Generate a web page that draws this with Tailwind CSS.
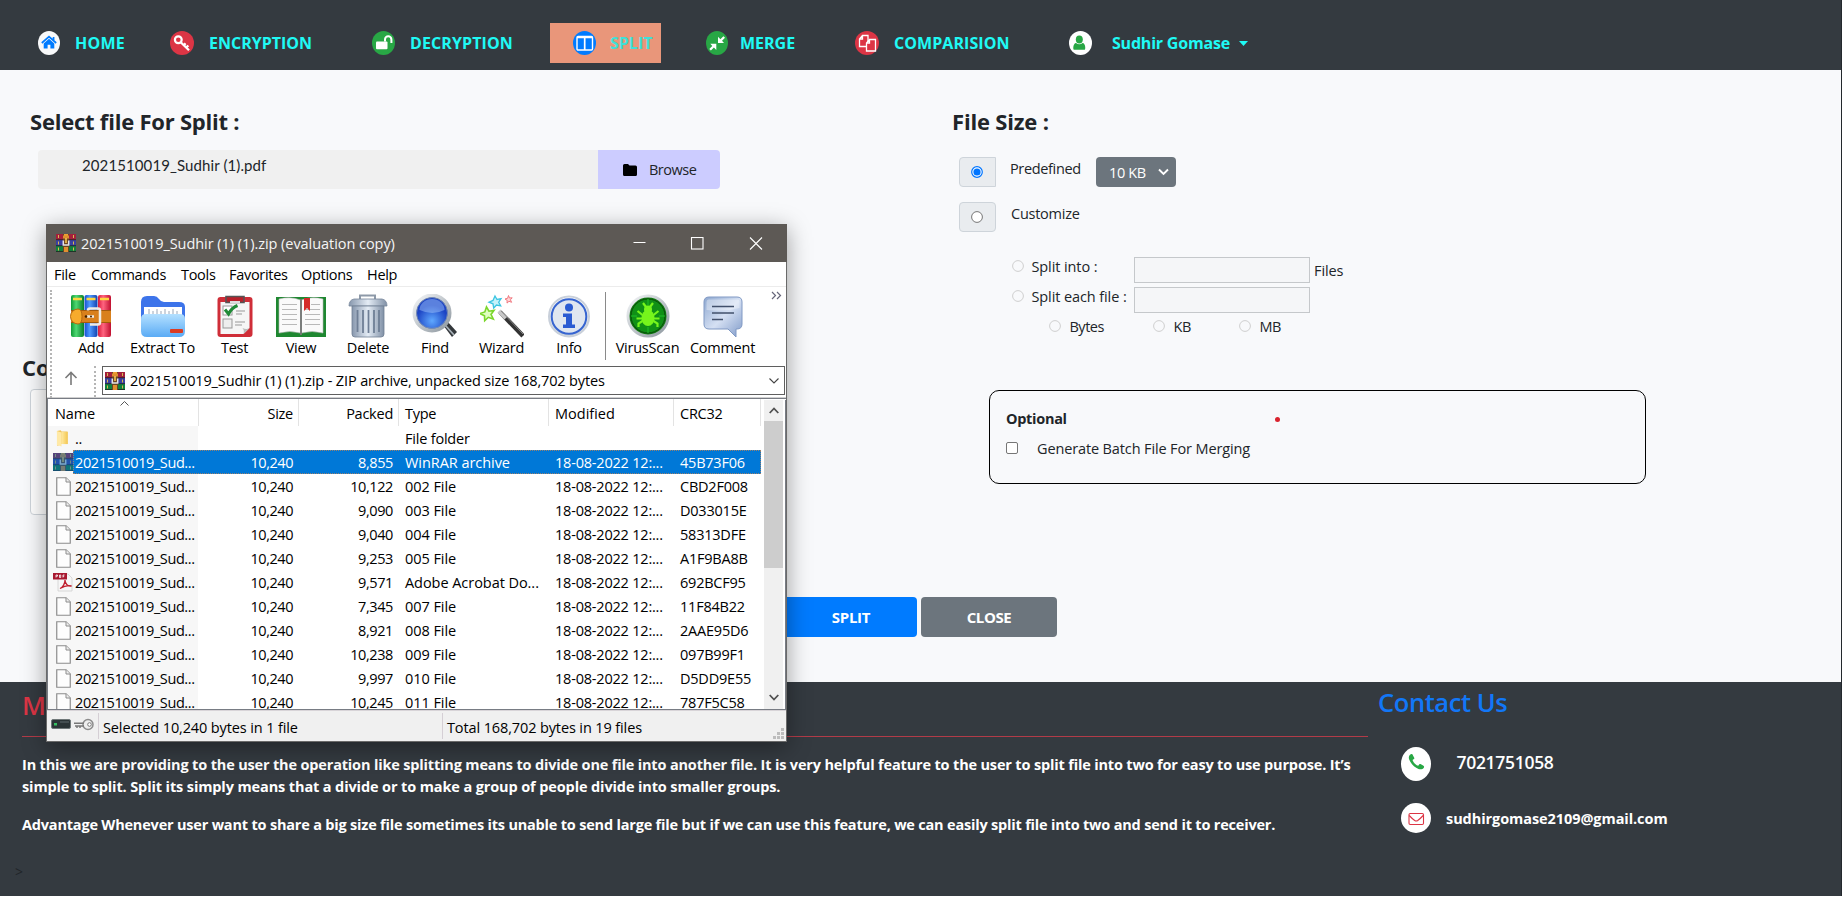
<!DOCTYPE html>
<html lang="en">
<head>
<meta charset="utf-8">
<title>Split PDF</title>
<script src="https://cdn.jsdelivr.net/npm/@tailwindcss/browser@4"></script>
</head>
<body class="relative h-[897px] w-[1842px] overflow-hidden bg-white font-['Open_Sans','Noto_Sans',sans-serif] text-[15px] text-[#212529]">
<svg width="0" height="0" class="absolute">
  <defs>
    <linearGradient id="gg" x2="1" y2="0"><stop offset="0" stop-color="#0f9a35"/><stop offset=".4" stop-color="#4fd873"/><stop offset="1" stop-color="#0a7f2a"/></linearGradient>
    <linearGradient id="gb" x2="1" y2="0"><stop offset="0" stop-color="#1550d0"/><stop offset=".4" stop-color="#4f9bff"/><stop offset="1" stop-color="#1242b0"/></linearGradient>
    <linearGradient id="gr" x2="1" y2="0"><stop offset="0" stop-color="#d81c3c"/><stop offset=".4" stop-color="#ff6480"/><stop offset="1" stop-color="#c01030"/></linearGradient>
    <linearGradient id="gf" x2="0" y2="1"><stop offset="0" stop-color="#b4e0ff"/><stop offset="1" stop-color="#5aabf5"/></linearGradient>
    <linearGradient id="gs" x2="1" y2="0"><stop offset="0" stop-color="#8797ad"/><stop offset=".5" stop-color="#e4ecf5"/><stop offset="1" stop-color="#8090a6"/></linearGradient>
    <linearGradient id="gc" x2="1" y2="1"><stop offset="0" stop-color="#8ea8d0"/><stop offset=".5" stop-color="#d5e0f3"/><stop offset="1" stop-color="#7f9ac8"/></linearGradient>
    <radialGradient id="gl" cy=".75"><stop offset="0" stop-color="#5fa8ff"/><stop offset="1" stop-color="#1c44c4"/></radialGradient>
    <linearGradient id="gm" x2="1" y2="1"><stop offset="0" stop-color="#f4f6f8"/><stop offset="1" stop-color="#8d979f"/></linearGradient>
    <linearGradient id="gi" x2="0" y2="1"><stop offset="0" stop-color="#fff"/><stop offset="1" stop-color="#c9d2dd"/></linearGradient>
    <linearGradient id="gy" x2="1" y2="0"><stop offset="0" stop-color="#ffe9a0"/><stop offset="1" stop-color="#f3c752"/></linearGradient>
    <symbol id="rar" viewBox="0 0 20 18">
      <rect width="20" height="6" fill="#a3203c"/><rect y="6" width="20" height="6" fill="#3a3fa0"/><rect y="12" width="20" height="6" fill="#12803c"/>
      <path d="M0 5.700h20M0 11.700h20M0 17.500h20" stroke="#222" stroke-width=".8"/>
      <path d="M2.500 1v3M2.500 7.500v3M2.500 13.500v3M17.500 1v3M17.500 7.500v3M17.500 13.500v3" stroke="#d8b850"/>
      <rect x="7" width="6" height="18" fill="#6a4424"/><path d="M8 0h4v4H8z" fill="#f0a030"/><path d="M7 1.500h6v3H7zM8 13h4v5H8z" fill="#e09030"/>
      <path d="M7.300 6.500v4.500h5.400V6.500" fill="none" stroke="#e4e4e4" stroke-width="1.500"/><path d="M10 4v5" stroke="#ffcc50" stroke-width="1.500"/>
    </symbol>
    <symbol id="page" viewBox="0 0 15 19"><path d="M.75.75H10l4.250 4.250v13.250H.75z" fill="#fdfdfd" stroke="#8c8c8c" stroke-width="1.200"/><path d="M10 .75V5h4.250" fill="#eee" stroke="#8c8c8c"/></symbol>
    <symbol id="pdf" viewBox="0 0 20 19"><path d="M5 1h10l4 4v13H5z" fill="#f6f6f6" stroke="#d0d0d0" stroke-width=".8"/><rect width="14" height="6.500" fill="#a81830"/><path d="M3 4.500V2h1.500v1.200H3M6.500 2v2.500h1.200V2zM10 4.500V2h1.500M10 3.300h1.200" stroke="#fff" stroke-width=".8" fill="none"/><path d="M7 15.500c3-1 5-5 5-8.500 0 4 3 6.500 6.500 6-4-1-8 .5-11.500 2.500z" fill="none" stroke="#c01f2e" stroke-width="1.300"/></symbol>
    <symbol id="folder" viewBox="0 0 14 18"><path d="M1 1l4-.8 1 1.300h6.500V15H5.500l-4 2z" fill="#f0c55a"/><path d="M1 1l5 1.500V17.500L1 16z" fill="#ffe9a6"/><path d="M6 2h6.500v13H6z" fill="url(#gy)"/></symbol>
  </defs>
</svg>

<!-- Navigation -->
<header class="flex h-[70px] w-[1841px] items-start bg-[#343a40] pt-[23px] pl-[38px] text-[16px] font-bold text-[#1ffaf5]">
  <a class="flex h-10 w-[132px] shrink-0 items-center">
    <svg class="mr-[15px] h-6 w-[22px]" viewBox="0 0 22 24"><ellipse cx="11" cy="12" rx="11" ry="12" fill="#f8f9fa"/><path d="M11 7.800 5.700 12.500v5h3.900v-3.700h2.800v3.700h3.900v-5z" fill="#007bff"/><path d="M3.800 12 11 5.700l7.200 6.300M15.600 6v3" fill="none" stroke="#007bff" stroke-width="1.700"/></svg>
    <span class="tracking-[0.2px]">HOME</span></a>
  <a class="flex h-10 w-[202px] shrink-0 items-center">
    <svg class="mr-[15px] h-6 w-6" viewBox="0 0 24 24"><ellipse cx="12" cy="12" rx="12" ry="12" fill="#dc3545"/><circle cx="8.300" cy="8.800" r="3.400" fill="none" stroke="#fff" stroke-width="2.200"/><path d="M10.700 11.200 19 19.300M16.300 16.500l2-2M13.800 14.200l1.800-1.800" stroke="#fff" stroke-width="2.300"/></svg>
    <span>ENCRYPTION</span></a>
  <a class="flex h-10 w-[178px] shrink-0 items-center">
    <svg class="mr-[15px] h-6 w-[23px]" viewBox="0 0 23 24"><ellipse cx="11.500" cy="12" rx="11.500" ry="12" fill="#28a745"/><rect x="4" y="10.500" width="11.500" height="7.800" rx="1" fill="#fff"/><path d="M13 10.500V8.500a3.200 3.200 0 0 1 6.400 0V12" fill="none" stroke="#fff" stroke-width="2"/></svg>
    <span class="tracking-[0.1px]">DECRYPTION</span></a>
  <a class="flex h-10 w-[111px] shrink-0 items-center bg-[#e9967a] pl-[23px]">
    <svg class="mr-[14px] h-6 w-[23px]" viewBox="0 0 23 24"><ellipse cx="11.500" cy="12" rx="11.500" ry="12" fill="#007bff"/><rect x="4" y="5.500" width="15.500" height="13.500" rx="1" fill="none" stroke="#fff" stroke-width="1.400"/><path d="M4 6.500h15.500M11.700 6v13" stroke="#fff" stroke-width="1.700"/></svg>
    <span class="text-[#40e0d8]">SPLIT</span></a>
  <a class="ml-[45px] flex h-10 w-[149px] shrink-0 items-center">
    <svg class="mr-[12px] h-6 w-[22px]" viewBox="0 0 22 24"><ellipse cx="11" cy="12" rx="11" ry="12" fill="#28a745"/><path d="M12 5.800V12h6l-2-2.200 3-3-1.600-1.600-3 3zM10.300 19v-6.200h-6l2 2.200-3 3 1.600 1.600 3-3z" fill="#fff"/></svg>
    <span>MERGE</span></a>
  <a class="flex h-10 w-[214px] shrink-0 items-center">
    <svg class="mr-[15px] h-6 w-6" viewBox="0 0 24 24"><ellipse cx="12" cy="12" rx="12" ry="12" fill="#dc3545"/><path d="M7.500 4.500h5.500v11H4.500V8zM7.500 4.500V8h-3" fill="none" stroke="#fff" stroke-width="1.300"/><path d="M14.500 8.500h6V20h-9v-8zM14.500 8.500V12h-3" fill="#dc3545" stroke="#fff" stroke-width="1.300"/></svg>
    <span class="tracking-[0.07px]">COMPARISION</span></a>
  <a class="flex h-10 shrink-0 items-center">
    <svg class="mr-[20px] h-6 w-[23px]" viewBox="0 0 23 24"><ellipse cx="11.500" cy="12" rx="11.500" ry="12" fill="#fff"/><ellipse cx="10.300" cy="8.500" rx="3.500" ry="4" fill="#28a745"/><path d="M5 18.800c-1.200 0-1-6.500 2-6.700 2 1.600 4.600 1.600 6.600 0 3 .2 3.200 6.700 2 6.700z" fill="#28a745"/></svg>
    <span class="w-[127px] tracking-[-0.2px]">Sudhir Gomase</span>
    <svg class="h-[5px] w-[9px]" viewBox="0 0 9 5"><path d="M0 0h9L4.500 5z" fill="#1ffaf5"/></svg></a>
</header>

<main class="flex h-[612px] w-[1841px] bg-[#f8f9fb]">
  <!-- File selection -->
  <section class="w-[952px] shrink-0 pt-[36px]">
    <h4 class="pl-[30px] text-[22px] leading-[30px] font-bold tracking-[-0.22px]">Select file For Split :</h4>
    <div class="mt-[14px] ml-[38px] flex h-[39px] w-[682px] overflow-hidden rounded-[4px]">
      <div class="w-[560px] bg-[#f0f0f0] pt-[4px] pl-[44px] font-['Lato',sans-serif] text-[15px] leading-[22px] tracking-[0.1px]">2021510019_Sudhir (1).pdf</div>
      <button class="flex flex-1 items-center bg-[#ccccff] pl-[25px]">
        <svg class="mr-[12px] h-[12px] w-[14px]" viewBox="0 0 14 12"><path d="M0 1.500Q0 0 1.500 0h3.500l1.500 1.500h6Q14 1.500 14 3v7.500Q14 12 12.500 12h-11Q0 12 0 10.500z"/></svg>
        <span class="text-[14.5px] tracking-[-0.5px]">Browse</span></button>
    </div>
    <h4 class="mt-[163px] pl-[22px] text-[22px] leading-[30px] font-bold">Co</h4>
    <div class="mt-[7px] ml-[30px] h-[126px] w-[700px] rounded-[4px] border border-[#ced4da] bg-white"></div>
    <div class="mt-[82px] ml-[781px] flex gap-1 text-center text-[15px] font-bold text-white">
      <button class="h-10 w-[136px] shrink-0 rounded-[4px] bg-[#007bff] pt-px pl-[4px] tracking-[-0.25px]">SPLIT</button>
      <button class="h-10 w-[136px] shrink-0 rounded-[4px] bg-[#6c757d] pt-px tracking-[-0.4px]">CLOSE</button>
    </div>
  </section>

  <!-- Size options -->
  <section class="flex-1 pt-[36px]">
    <h4 class="text-[22px] leading-[30px] font-bold tracking-[-0.18px]">File Size :</h4>
    <div class="mt-[21px] ml-[7px] flex h-[30px]">
      <div class="flex w-[37px] items-center rounded-l-[4px] border border-[#ced4da] bg-[#e9ecef] pl-[10.500px]">
        <svg class="size-3" viewBox="0 0 12 12"><circle cx="6" cy="6" r="5.300" fill="#fff" stroke="#0075ff" stroke-width="1.200"/><circle cx="6" cy="6" r="3.600" fill="#0075ff"/></svg></div>
      <span class="w-[100px] pl-[14px] text-[14.5px] leading-[23px] tracking-[-0.35px]">Predefined</span>
      <div class="flex w-20 items-center rounded-[4px] bg-[#6c757d] pl-[13px] text-[14.5px] text-white"><span class="w-[49px] pt-px tracking-[-0.4px]">10 KB</span>
        <svg class="h-[8px] w-[11px]" viewBox="0 0 11 8"><path d="M1 1.500 5.500 6 10 1.500" fill="none" stroke="#fff" stroke-width="1.900"/></svg></div>
    </div>
    <div class="mt-[15px] ml-[7px] flex h-[30px]">
      <div class="flex w-[37px] items-center rounded-[4px] border border-[#ced4da] bg-[#e9ecef] pl-[10.500px]">
        <svg class="size-3" viewBox="0 0 12 12"><circle cx="6" cy="6" r="5.400" fill="#fff" stroke="#767676"/></svg></div>
      <span class="pl-[15px] text-[14.5px] leading-[23px] tracking-[-0.25px]">Customize</span>
    </div>
    <div class="mt-[25px] ml-[60px] flex h-[26px] text-[14.5px] tracking-[-0.1px]">
      <svg class="mt-[2.500px] size-3" viewBox="0 0 12 12"><circle cx="6" cy="6" r="5.400" fill="#f8f9fb" stroke="#cfcfcf"/></svg>
      <span class="w-[110px] pl-[7.500px] leading-[20px]">Split into :</span>
      <input disabled class="h-[26px] w-[176px] border border-[#c5c8cb] bg-[#f5f6f8]"><span class="pl-1 leading-[27px]">Files</span>
    </div>
    <div class="mt-1 ml-[60px] flex h-[26px] text-[14.5px] tracking-[-0.1px]">
      <svg class="mt-[2.500px] size-3" viewBox="0 0 12 12"><circle cx="6" cy="6" r="5.400" fill="#f8f9fb" stroke="#cfcfcf"/></svg>
      <span class="w-[110px] pl-[7.500px] leading-[20px]">Split each file :</span>
      <input disabled class="h-[26px] w-[176px] border border-[#c5c8cb] bg-[#f5f6f8]">
    </div>
    <div class="mt-[3px] ml-[96.500px] flex h-[22px] items-center text-[14.500px] tracking-[-0.5px]">
      <svg class="mr-[9px] mb-[3px] size-3" viewBox="0 0 12 12"><circle cx="6" cy="6" r="5.400" fill="#f8f9fb" stroke="#cfcfcf"/></svg><span class="w-[83px]">Bytes</span>
      <svg class="mr-[9px] mb-[3px] size-3" viewBox="0 0 12 12"><circle cx="6" cy="6" r="5.400" fill="#f8f9fb" stroke="#cfcfcf"/></svg><span class="w-[65px]">KB</span>
      <svg class="mr-[9px] mb-[3px] size-3" viewBox="0 0 12 12"><circle cx="6" cy="6" r="5.400" fill="#f8f9fb" stroke="#cfcfcf"/></svg><span>MB</span>
    </div>
    <div class="mt-[52px] ml-[37px] h-[94px] w-[657px] rounded-[10px] border border-black pt-[18px] pl-4">
      <div class="flex h-[20px] items-center"><b class="w-[269px] text-[14.5px] tracking-[-0.3px]">Optional</b><svg class="size-[5px]" viewBox="0 0 5 5"><circle cx="2.500" cy="2.500" r="2.500" fill="#d9232e"/></svg></div>
      <div class="mt-[9px] flex h-[22px] items-center"><span class="mb-[3px] size-3 rounded-[2px] border border-[#767676] bg-white"></span><span class="pl-[19px] text-[14.5px] tracking-[-0.13px]">Generate Batch File For Merging</span></div>
    </div>
  </section>
</main>

<footer class="flex h-[214px] w-[1841px] bg-[#343a40] text-white">
  <div class="w-[1368px] shrink-0 pl-[22px]">
    <h3 class="h-[55px] border-b border-[#b23b48] pt-[5px] text-[26px] leading-[36px] font-semibold text-[#dc3545]">M</h3>
    <p class="mt-[17px] text-[14.500px] leading-[22.400px] font-bold tracking-[-0.165px] whitespace-nowrap">In this we are providing to the user the operation like splitting means to divide one file into another file. It is very helpful feature to the user to split file into two for easy to use purpose. It’s<br><span class="tracking-[-0.12px]">simple to split. Split its simply means that a divide or to make a group of people divide into smaller groups.</span></p>
    <p class="mt-[15px] text-[14.500px] leading-[22.400px] font-bold tracking-[-0.195px] whitespace-nowrap">Advantage Whenever user want to share a big size file sometimes its unable to send large file but if we can use this feature, we can easily split file into two and send it to receiver.</p>
    <div class="mt-[26px] -ml-[7px] text-[14px] leading-[20px] text-[#212529]">&gt;</div>
  </div>
  <div class="pt-[2px] pl-[10px]">
    <h3 class="text-[25.500px] leading-[36px] font-semibold tracking-[-0.42px] text-[#1277f7]">Contact Us</h3>
    <div class="mt-[27px] ml-[23px] flex h-[34px]">
      <svg class="h-[34px] w-[30px]" viewBox="0 0 30 34"><ellipse cx="15" cy="17" rx="15" ry="17" fill="#fff"/><path d="M9 7.800c-1.300 1-1.500 2.700-.8 4.700 1.500 4 5.300 8 9.300 9.500 2 .7 4.300.4 5.300-1.300.5-1 .3-1.700-.3-2l-3-1.600c-.6-.3-1-.1-1.300.3l-1 1.400c-2.600-1-4.700-3-5.700-5.700l1.400-1c.5-.4.6-.8.3-1.400L11.500 7.600c-.6-.9-1.600-.5-2.500.2z" fill="#28a745"/></svg>
      <span class="pl-[25.500px] text-[17.500px] leading-[31px] font-semibold tracking-[-0.3px]">7021751058</span></div>
    <div class="mt-[22px] ml-[23px] flex h-[30px] items-center">
      <svg class="h-[30px] w-[30px]" viewBox="0 0 30 30"><circle cx="15" cy="15" r="15" fill="#fff"/><rect x="8" y="10.500" width="14.500" height="11" rx="1.200" fill="none" stroke="#dc3545" stroke-width="1.100"/><path d="M8.200 12.500q3 3.200 5.500 5 1.500 1 3 0 2.500-1.800 5.500-5" fill="none" stroke="#dc3545" stroke-width="1.100"/></svg>
      <span class="pt-[2px] pl-[15px] text-[14.500px] font-bold tracking-[-0.07px]">sudhirgomase2109@gmail.com</span></div>
  </div>
</footer>
<div class="absolute top-0 right-0 h-[896px] w-px bg-[#23282d]"></div>

<!-- Archive window -->
<div class="absolute top-[224px] left-[46px] flex h-[518px] w-[741px] flex-col border border-[#6a6a6a] bg-white text-[14.500px] text-black shadow-[0_5px_22px_rgba(0,0,0,0.38)]">
  <div class="-mx-px -mt-px flex h-[38px] shrink-0 items-center bg-[#5d5955] pl-[10px] text-white">
    <svg class="mr-[5px] h-[18px] w-5"><use href="#rar"/></svg>
    <span class="flex-1 pt-px tracking-[-0.05px] text-[#f5f5f5]">2021510019_Sudhir (1) (1).zip (evaluation copy)</span>
    <svg class="mr-[24px] h-[13px] w-[130px]" viewBox="0 0 130 13" fill="none" stroke="#fff" stroke-width="1.100"><path d="M0.500 5.500h12M117 .500l12 12M129 .500l-12 12"/><rect x="58.500" y=".500" width="11.500" height="11.500"/></svg>
  </div>
  <div class="flex h-[25px] shrink-0 items-center border-b border-[#ececec] pt-[2px] pl-[7px] tracking-[-0.3px]">
    <span class="w-[37px]">File</span><span class="w-[90px]">Commands</span><span class="w-[48px]">Tools</span><span class="w-[72px]">Favorites</span><span class="w-[66px]">Options</span><span>Help</span>
  </div>
  <div class="relative flex h-[79px] shrink-0 pt-[7px] pl-[10px] text-center leading-[20px] tracking-[-0.25px]">
    <div class="absolute top-[3px] left-[3px] h-[108px] border-l-2 border-dotted border-[#b5b5b5]"></div>
    <div class="flex w-[68px] flex-col items-center">
      <svg class="h-[44px] w-[42px]" viewBox="0 0 42 44"><rect x="1" y="1" width="13" height="42" rx="2" fill="url(#gg)"/><rect x="14.500" y="1" width="13" height="42" rx="2" fill="url(#gb)"/><rect x="28" y="1" width="13" height="42" rx="2" fill="url(#gr)"/><path d="M3 5h9M16.500 5h9M30 5h9" stroke="#ffd640" stroke-width="2.500"/><rect x="1" y="16" width="40" height="13" fill="#d9801c"/><path d="M1 16.500h40M1 28.500h40" stroke="#a35a0c"/><path d="M8 15a7.500 7.500 0 0 0 0 15q4 0 4-7.500T8 15z" fill="#f7ab2c" stroke="#b5690f"/><path d="M18 16.500q0-2 2-2h8q2 0 2 2v12q0 2-2 2h-8M24 22.500h-7" fill="none" stroke="#f0ece4" stroke-width="2.500"/><circle cx="16" cy="22.500" r="1.300" fill="#402000"/><circle cx="21" cy="22.500" r="1" fill="#402000"/></svg>
      <span>Add</span></div>
    <div class="flex w-[75px] flex-col items-center">
      <svg class="h-[44px] w-[46px]" viewBox="0 0 46 44"><path d="M1 8q0-6 6-6h7q3 0 5 3t5 3h15q6 0 6 5v16H1z" fill="#3d74ea"/><path d="M4 13h38v12H4z" fill="#fff"/><path d="M9 15v5M13 17v3M17 15v5M21 17v3M25 15v5M29 17v3M33 15v5M37 17v3" stroke="#9aa7b8"/><path d="M1 25q0-5 5-5h34q5 0 5 5v12q0 6-6 6H7q-6 0-6-6z" fill="url(#gf)"/><rect x="30" y="35" width="13" height="4" rx="1" fill="#dc3b22"/></svg>
      <span>Extract To</span></div>
    <div class="flex w-[69px] flex-col items-center">
      <svg class="h-[44px] w-[36px]" viewBox="0 0 36 44"><rect x=".5" y="3" width="35" height="40" rx="3" fill="#cf2e38"/><path d="M3.500 8h29v26l-6 6h-23z" fill="#f6f6f6"/><path d="M32.500 34l-6 6q1-4-1-6 4 2 7 0z" fill="#bbb"/><path d="M9 2.500h18v6H9z" fill="#b8202a" stroke="#555" stroke-width="1.600"/><path d="M13 8h10" stroke="#ddd" stroke-width="2"/><rect x="6" y="12" width="9" height="9" fill="#fff" stroke="#999"/><rect x="6" y="25" width="9" height="9" fill="#eee" stroke="#999"/><path d="M8 15.500 11.500 20q3-6 9-8.500" fill="none" stroke="#1f8a36" stroke-width="3"/><path d="M19 17h9M19 20h6M18 28h10M18 31h7" stroke="#999"/></svg>
      <span>Test</span></div>
    <div class="flex w-[64px] flex-col items-center">
      <svg class="h-[44px] w-[52px]" viewBox="0 0 52 44"><path d="M1 3h50v40H1z" fill="#1e8730"/><path d="M4 5q11-3 21.500 1v33Q15 36 4 39z" fill="#fafafa" stroke="#bbb" stroke-width=".6"/><path d="M48 5Q37 2 26.500 6v33Q37 36 48 39z" fill="#fafafa" stroke="#bbb" stroke-width=".6"/><path d="M26 5v36" stroke="#777" stroke-width="1.800"/><path d="M7 10.500h15M7 15.500h15M7 20.500h15M7 25.500h15M7 30.500h15M30 20.500h15M30 15.500h15M30 25.500h15M30 30.500h15M36 10.500h9" stroke="#b9b9b9" stroke-width="1.200"/><path d="M29 4h6v13l-3-3-3 3z" fill="#d52a2a"/></svg>
      <span>View</span></div>
    <div class="flex w-[70px] flex-col items-center">
      <svg class="h-[44px] w-[40px]" viewBox="0 0 40 44"><path d="M12 5V1.500h15V5" fill="none" stroke="#8d99a8" stroke-width="2"/><path d="M1 12q0-6 5-7h28q5 1 5 7z" fill="url(#gs)" stroke="#77869a" stroke-width=".8"/><path d="M4 12h32v28q0 3-3 3H7q-3 0-3-3z" fill="url(#gs)" stroke="#6e7d92" stroke-width=".8"/><path d="M9.500 16v22M15 16v23M20.500 16v23M26 16v23M31 16v22" stroke="#6f7f96" stroke-width="1.800"/></svg>
      <span>Delete</span></div>
    <div class="flex w-[64px] flex-col items-center">
      <svg class="h-[44px] w-[46px]" viewBox="0 0 46 44"><path d="M31 31l4-4 10 11-5 5z" fill="#33373b"/><path d="M33 31l9 10" stroke="#a9b2b9" stroke-width="1.800"/><circle cx="20" cy="19" r="17.500" fill="#3063da" stroke="url(#gm)" stroke-width="4"/><circle cx="20" cy="19" r="15.500" fill="url(#gl)" stroke="#8192ab" stroke-width=".8"/><path d="M7.500 16a12.500 11 0 0 1 25 0q-12 6-25 0z" fill="#a9ccff" opacity=".45"/></svg>
      <span>Find</span></div>
    <div class="flex w-[69px] flex-col items-center">
      <svg class="h-[44px] w-[44px]" viewBox="0 0 44 44"><path d="M20 18l23 24" stroke="#333" stroke-width="4.500"/><path d="M19 17l7 7" stroke="#c8c8c8" stroke-width="4.500"/><path d="M21 17l22 23" stroke="#888"/><path d="M15 2l2 3.500 4-.8-2.300 3.500 2 3.600-4.200-.8-2.800 3-.7-4.200-4-1.600 4-1.800z" fill="#c5f2fa" stroke="#3cc5e2" stroke-width="1.300"/><path d="M28.500 1.500l1 2.500 2.700-.2-1.800 2 1.200 2.500-2.600-1-2 1.800.2-2.700-2.200-1.400 2.600-.7z" fill="#ffd4d4" stroke="#f07880"/><path d="M6.500 13l2.500 4.200 5-.8-3 4 2.300 4.600-5-1.700-3.600 3.500-.2-5L0 19.500l4.800-1.600z" fill="#e0ffc0" stroke="#7bd62c" stroke-width="1.600"/></svg>
      <span>Wizard</span></div>
    <div class="flex w-[66px] flex-col items-center">
      <svg class="h-[44px] w-[44px]" viewBox="0 0 44 44"><circle cx="22" cy="22.500" r="20" fill="url(#gi)" stroke="#c9d0da" stroke-width="2"/><circle cx="22" cy="22.500" r="17.300" fill="#dfe6f0" stroke="#3664d0" stroke-width="2"/><circle cx="22" cy="13.500" r="4" fill="#2a5bd2"/><path d="M16 19.500h9v11h3v3.500H16v-3.500h3V23h-3z" fill="#2a5bd2"/></svg>
      <span>Info</span></div>
    <div class="-mt-[2px] mr-[4px] ml-[3px] h-[68px] w-px shrink-0 bg-[#8a8a8a]"></div>
    <div class="flex w-[75px] shrink-0 flex-col items-center">
      <svg class="h-[44px] w-[44px]" viewBox="0 0 44 44"><circle cx="22" cy="22" r="20" fill="#0f7a10" stroke="url(#gm)" stroke-width="3"/><circle cx="22" cy="22" r="17" fill="#109016" stroke="#0a4a0a"/><path d="M22 5v6M22 33v6M5 22h6M33 22h6" stroke="#1fc028"/><ellipse cx="22" cy="24" rx="6.500" ry="8" fill="#76f51c"/><circle cx="22" cy="15.500" r="4" fill="#76f51c"/><path d="M17 9l3 4M27 9l-3 4M11.500 17l5 4M32.500 17l-5 4M10.500 24.500h6M33.500 24.500h-6M12.500 33v-3.500l4-2.500M31.500 33v-3.500l-4-2.500" stroke="#76f51c" stroke-width="2.200" fill="none"/></svg>
      <span>VirusScan</span></div>
    <div class="flex w-[75px] shrink-0 flex-col items-center">
      <svg class="h-[44px] w-[40px]" viewBox="0 0 40 44"><path d="M6 3h28q5 0 5 5v22q0 5-5 5h-1v8l-8-8H6q-5 0-5-5V8q0-5 5-5z" fill="url(#gc)" stroke="#8099c4"/><path d="M5.500 5.500h29q2 0 2 2V14q-15 4-33 2V8q0-2.500 2-2.500z" fill="#fff" opacity=".35"/><path d="M9 12.500h22M9 19h22M9 25.500h11" stroke="#42506b" stroke-width="1.700"/></svg>
      <span>Comment</span></div>
    <svg class="absolute top-[4px] right-[4px] h-[9px] w-[11px]" viewBox="0 0 11 9"><path d="M1 1l3.500 3.500L1 8M6 1l3.500 3.500L6 8" fill="none" stroke="#66667a" stroke-width="1.200"/></svg>
  </div>
  <div class="flex h-[32px] shrink-0 border-b border-[#d0d0d0] pr-[1px]">
    <svg class="mt-[5px] ml-[17px] h-[14px] w-[14px]" viewBox="0 0 14 14"><path d="M7 14V1.500M1.500 7 7 1.500 12.500 7" fill="none" stroke="#7a7a7a" stroke-width="1.600"/></svg>
    <div class="ml-[16px] h-[31px] border-l-2 border-dotted border-[#b5b5b5]"></div>
    <div class="ml-[6px] flex h-[29px] flex-1 items-center border border-[#5f5f5f] pl-[2px]">
      <svg class="mr-[5px] h-[18px] w-5"><use href="#rar"/></svg>
      <span class="flex-1 tracking-[-0.13px]">2021510019_Sudhir (1) (1).zip - ZIP archive, unpacked size 168,702 bytes</span>
      <svg class="mr-[5px] h-[6px] w-[10px]" viewBox="0 0 10 6"><path d="M.5.500 5 5 9.500.500" fill="none" stroke="#444" stroke-width="1.100"/></svg>
    </div>
  </div>
  <!-- File list -->
  <div class="flex h-[312px] shrink-0 overflow-hidden border-y border-l border-[#787c84]">
    <div class="h-[310px] w-[714px] shrink-0 overflow-hidden">
      <div class="relative flex h-[27px] items-center tracking-[-0.25px]">
        <svg class="absolute top-[2px] left-[72px] h-[5px] w-[9px]" viewBox="0 0 9 5"><path d="M.5 4.500l4-4 4 4" fill="none" stroke="#555"/></svg>
        <span class="flex h-full w-[151px] items-center border-r border-[#e3e3e3] pt-[3px] pl-[7px] tracking-[-0.1px]">Name</span>
        <span class="flex h-full w-[100px] items-center justify-end border-r border-[#e3e3e3] pt-[3px] pr-[5px]">Size</span>
        <span class="flex h-full w-[100px] items-center justify-end border-r border-[#e3e3e3] pt-[3px] pr-[5px]">Packed</span>
        <span class="flex h-full w-[150px] items-center border-r border-[#e3e3e3] pt-[3px] pl-[6px]">Type</span>
        <span class="flex h-full w-[125px] items-center border-r border-[#e3e3e3] pt-[3px] pl-[6px] tracking-normal">Modified</span>
        <span class="flex h-full w-[87px] items-center border-r border-[#e3e3e3] pt-[3px] pl-[6px]">CRC32</span>
      </div>
      <div id="rows"></div>
    </div>
    <div class="mt-px ml-[2px] flex h-[309px] w-[19px] flex-col items-center bg-[#f0f0f0]">
      <svg class="mt-[7px] h-[7px] w-[10px]" viewBox="0 0 10 7"><path d="M.7 6 5 1.500 9.300 6" fill="none" stroke="#505050" stroke-width="1.800"/></svg>
      <div class="mt-[7px] h-[147px] w-full bg-[#cdcdcd]"></div>
      <svg class="mt-auto mb-[8px] h-[7px] w-[10px]" viewBox="0 0 10 7"><path d="M.7 1 5 5.500 9.300 1" fill="none" stroke="#505050" stroke-width="1.800"/></svg>
    </div>
    <div class="mt-px ml-[2px] w-px bg-[#787c84]"></div>
  </div>
  <div class="flex flex-1 items-center border-t border-[#d8d4d8] bg-[#f0f0f0] tracking-[-0.12px]">
    <svg class="mb-1 ml-[4px] h-[10px] w-[20px]" viewBox="0 0 20 10"><rect x=".5" y=".5" width="19" height="9" rx="1.500" fill="#2b3436" stroke="#6f7778"/><rect x="3" y="4" width="3" height="2.500" fill="#35c060"/><path d="M9 3h9" stroke="#5e696c"/></svg>
    <svg class="mb-1 ml-[3px] h-[13px] w-[20px]" viewBox="0 0 20 13"><circle cx="14" cy="6.500" r="5" fill="#eee" stroke="#8c8c8c" stroke-width="1.500"/><circle cx="15.500" cy="6.500" r="1.800" fill="#fff" stroke="#777"/><path d="M0 5.300h10M1 8h9M3 8v2M6 8v2" stroke="#777" stroke-width="1.500"/></svg>
    <div class="ml-[4px] h-[26px] w-px bg-[#d5cfd5]"></div>
    <span class="w-[343px] pt-[3px] pl-[4px]">Selected 10,240 bytes in 1 file</span>
    <div class="h-[26px] w-px bg-[#d5cfd5]"></div>
    <span class="flex-1 pt-[3px] pl-[4px]">Total 168,702 bytes in 19 files</span>
    <svg class="mr-[2px] mb-[2px] size-[11px] self-end" viewBox="0 0 11 11" fill="#bdbdbd"><path d="M8 0h3v3H8zM8 4h3v3H8zM4 4h3v3H4zM8 8h3v3H8zM4 8h3v3H4zM0 8h3v3H0z"/></svg>
  </div>
</div>
<script>
const files = [
  ['8,855','WinRAR archive','45B73F06'],['10,122','002 File','CBD2F008'],['9,090','003 File','D033015E'],
  ['9,040','004 File','58313DFE'],['9,253','005 File','A1F9BA8B'],['9,571','Adobe Acrobat Do...','692BCF95'],
  ['7,345','007 File','11F84B22'],['8,921','008 File','2AAE95D6'],['10,238','009 File','097B99F1'],
  ['9,997','010 File','D5DD9E55'],['10,245','011 File','787F5C58']];
let html = `<div class="flex h-6 items-center tracking-[-0.2px]">
  <span class="flex h-6 w-[150px] items-center bg-[#f7f7f7] pt-px pl-[8px]"><svg class="mr-[6px] h-[17px] w-[13px]"><use href="#folder"/></svg><span>..</span></span>
  <span class="pt-px pl-[207px]">File folder</span></div>`;
files.forEach(([packed, type, crc], i) => {
  const sel = i === 0;
  const icon = sel ? '<svg class="ml-[5px] h-[18px] w-5 shrink-0"><use href="#rar"/><rect width="20" height="18" fill="#0a68b8" opacity=".5"/></svg>'
    : i === 5 ? '<svg class="ml-[5px] h-[19px] w-5 shrink-0"><use href="#pdf"/></svg>'
    : '<svg class="mr-[2px] ml-[8px] h-[19px] w-[15px] shrink-0"><use href="#page"/></svg>';
  html += `<div class="flex h-6">
    <span class="flex h-6 w-[25px] shrink-0 items-center bg-[#f7f7f7]">${icon}</span>
    <div class="${sel ? 'flex h-6 w-[688px] items-center bg-[#0078d7] text-white outline-1 -outline-offset-1 outline-dotted outline-[#ff8728]/60' : 'flex h-6 w-[688px] items-center'}">
      <span class="${sel ? 'flex h-6 w-[125px] items-center pt-px pl-[2px] tracking-[-0.4px]' : 'flex h-6 w-[125px] items-center bg-[#f7f7f7] pt-px pl-[2px] tracking-[-0.4px]'}">2021510019_Sud...</span>
      <span class="w-[95px] pt-px text-right tracking-[-0.45px]">10,240</span>
      <span class="w-[100px] pt-px text-right tracking-[-0.4px]">${packed}</span>
      <span class="w-[150px] pt-px pl-[12px] tracking-[-0.05px]">${type}</span>
      <span class="w-[125px] pt-px pl-[12px] tracking-[-0.2px]">18-08-2022 12:...</span>
      <span class="pt-px pl-[12px] tracking-[-0.22px]">${crc}</span>
    </div></div>`;
});
document.getElementById('rows').innerHTML = html;
</script>
</body>
</html>
